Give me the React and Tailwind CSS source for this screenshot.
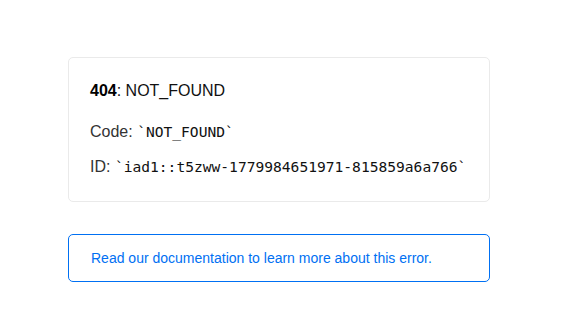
export default function App() {
  return (
    <div className="min-h-screen bg-white font-['Liberation_Sans',Arial,sans-serif] text-[#111]">
      <div className="pl-[68px] pt-[57px] w-[490px]">
        <div className="border border-[#eaeaea] rounded-[5px] px-[21px] pt-[21px] pb-[22px] w-[422px]">
          <p className="text-[16px] leading-6">
            <strong className="font-bold text-black">404</strong>: NOT_FOUND
          </p>
          <p className="text-[16px] leading-6 mt-[17px] text-[#333]">
            Code: <code className="font-['DejaVu_Sans_Mono',monospace] text-[14.6px] text-[#111]">`NOT_FOUND`</code>
          </p>
          <p className="text-[16px] leading-6 mt-[11px] text-[#333]">
            ID: <code className="font-['DejaVu_Sans_Mono',monospace] text-[14.6px] text-[#111]">`iad1::t5zww-1779984651971-815859a6a766`</code>
          </p>
        </div>
        <a
          href="#"
          className="mt-[32px] flex items-center h-[48px] w-[422px] border border-[#0070f3] rounded-[5px] px-[22px] text-[14px] text-[#0070f3]"
        >
          Read our documentation to learn more about this error.
        </a>
      </div>
    </div>
  );
}
